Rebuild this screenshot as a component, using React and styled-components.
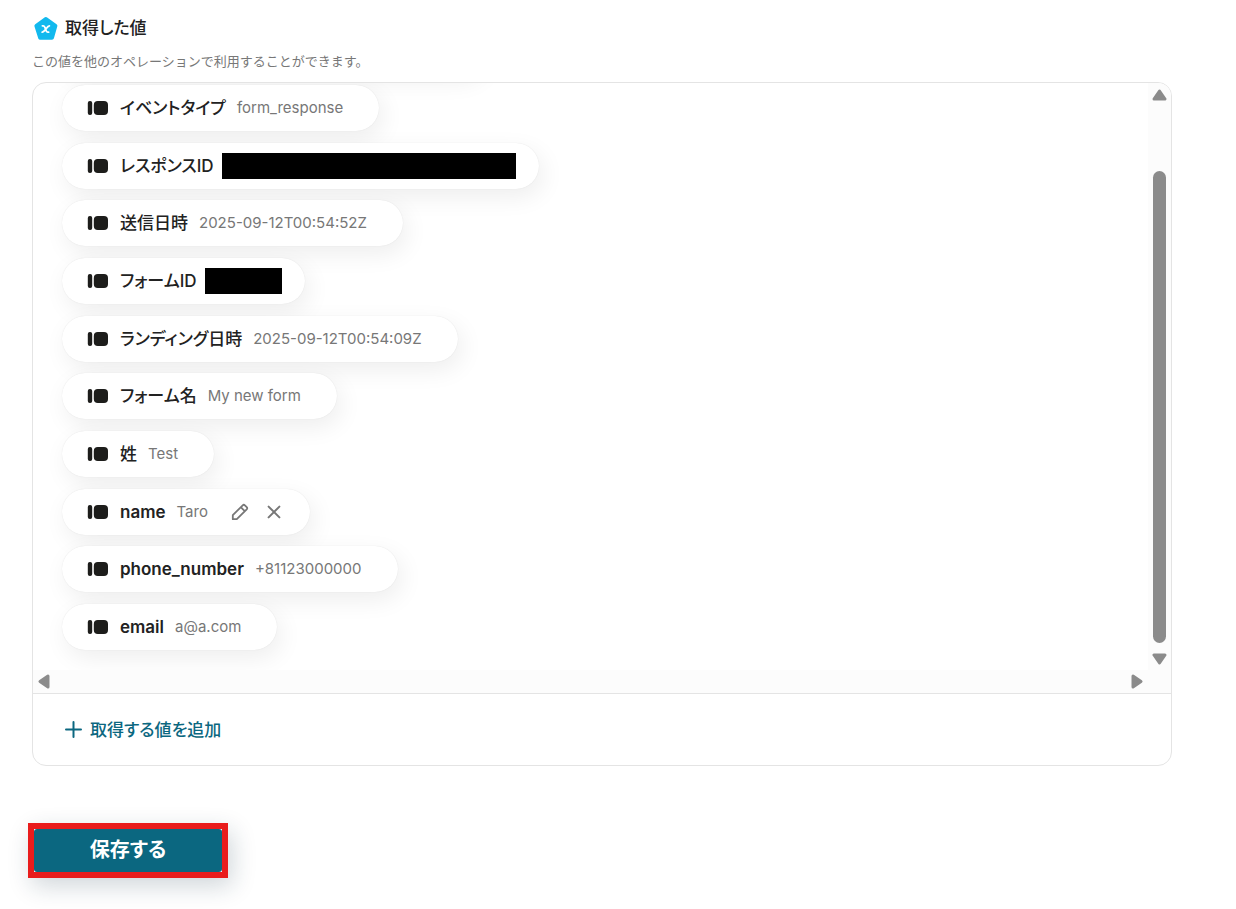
import React from "react";
import styled, { createGlobalStyle } from "styled-components";

const GlobalStyle = createGlobalStyle`
  * {
    box-sizing: border-box;
  }

  body {
    margin: 0;
    background: #fff;
    color: #222;
    font-family: Inter, "Noto Sans CJK JP", sans-serif;
    font-feature-settings: "palt";
  }

  button {
    font: inherit;
    font-feature-settings: inherit;
    cursor: pointer;
  }
`;

const Page = styled.main`
  padding: 16px 64px 32px 32px;
`;

const Header = styled.header`
  display: flex;
  align-items: center;
  gap: 6px;
  height: 24px;
  padding-left: 2px;
`;

const Title = styled.h2`
  margin: 0;
  font-size: 17px;
  line-height: 24px;
  font-weight: 500;
`;

const Description = styled.p`
  margin: 12px 0;
  font-size: 13px;
  line-height: 18px;
  font-feature-settings: normal;
  color: #777;
`;

const Panel = styled.section`
  border: 1px solid #e4e4e4;
  border-radius: 14px;
  overflow: hidden;
`;

const ScrollArea = styled.div`
  display: grid;
  grid-template-columns: 1fr 23px;
  grid-template-rows: 587px 23px;
`;

const Values = styled.ul`
  position: relative;
  display: flex;
  flex-direction: column;
  align-items: flex-start;
  justify-content: space-between;
  margin: 0;
  padding: 2px 29px 20px;
  list-style: none;
  overflow: hidden;

  /* the row scrolled out above the list */
  &::before {
    content: "";
    position: absolute;
    top: -56px;
    left: 29px;
    width: 420px;
    height: 46px;
    border-radius: 23px;
    box-shadow: 4px 8px 24px rgba(0, 0, 0, 0.07);
  }
`;

const Pill = styled.li`
  position: relative;
  display: flex;
  align-items: center;
  height: 46px;
  padding: 0 ${(props) => (props.$masked ? 23 : 36)}px 0 25px;
  border-radius: 23px;
  background: #fff;
  box-shadow: 4px 8px 24px rgba(0, 0, 0, 0.07), 0 0 1px rgba(0, 0, 0, 0.12);
`;

const Name = styled.span`
  margin-left: 12px;
  font-size: 17px;
  line-height: 24px;
  font-weight: ${(props) => (props.$latin ? 600 : 500)};
`;

const Value = styled.span`
  margin-left: 11px;
  font-size: 15px;
  line-height: 20px;
  color: #777;
`;

const Mask = styled.span`
  width: ${(props) => props.$width}px;
  height: 26px;
  margin-left: 8px;
  background: #000;
`;

const Actions = styled.span`
  display: flex;
  gap: 14px;
  margin: 0 -10px 0 22px;
`;

const IconButton = styled.button`
  display: flex;
  padding: 0;
  border: 0;
  background: none;
  color: #777;
`;

const Track = styled.div`
  display: flex;
  flex-direction: ${(props) => (props.$vertical ? "column" : "row")};
  align-items: center;
  justify-content: space-between;
  padding: ${(props) => (props.$vertical ? "6px 0 5px" : "0 5px")};
  background: #fcfcfc;
`;

const Thumb = styled.div`
  width: 13px;
  height: 472px;
  margin-top: 60px;
  border-radius: 7px;
  background: #8b8b8b;
`;

const Corner = styled.div`
  background: #fcfcfc;
`;

const PanelFooter = styled.div`
  display: flex;
  align-items: center;
  height: 72px;
  padding: 0 32px;
  border-top: 1px solid #e4e4e4;
`;

const AddButton = styled.button`
  display: flex;
  align-items: center;
  gap: 8px;
  padding: 0;
  border: 0;
  background: none;
  color: #0b6780;
  font-size: 17px;
  line-height: 24px;
  font-weight: 500;
`;

const SaveFrame = styled.div`
  width: 200px;
  margin: 57px 0 0 -4px;
  border: 6px solid #e91c1c;
  box-shadow: 4px 8px 24px rgba(20, 50, 70, 0.2);
`;

const SaveButton = styled.button`
  display: block;
  width: 100%;
  height: 43px;
  padding: 0 0 2px;
  border: 0;
  border-radius: 3px;
  background: #0b6780;
  color: #fff;
  font-size: 20px;
  line-height: 28px;
  font-weight: 700;
`;

const rows = [
  { name: "イベントタイプ", value: "form_response" },
  { name: "レスポンスID", mask: 294 },
  { name: "送信日時", value: "2025-09-12T00:54:52Z" },
  { name: "フォームID", mask: 77 },
  { name: "ランディング日時", value: "2025-09-12T00:54:09Z" },
  { name: "フォーム名", value: "My new form" },
  { name: "姓", value: "Test" },
  { name: "name", value: "Taro", latin: true, editable: true },
  { name: "phone_number", value: "+81123000000", latin: true },
  { name: "email", value: "a@a.com", latin: true },
];

const arrows = {
  up: "M7.5 2 13 10H2Z",
  down: "M7.5 10 2 2H13Z",
  left: "M2 7.5 10 2V13Z",
  right: "M10 7.5 2 2V13Z",
};

function Arrow({ direction }) {
  const vertical = direction === "up" || direction === "down";
  return (
    <svg width={vertical ? 15 : 12} height={vertical ? 12 : 15}>
      <path
        d={arrows[direction]}
        fill="#8b8b8b"
        stroke="#8b8b8b"
        strokeWidth="3"
        strokeLinejoin="round"
      />
    </svg>
  );
}

function VariableIcon() {
  return (
    <svg width="25" height="24" viewBox="0 0 25 24">
      <path
        d="M12 3 21.4 9.8 18 21.8H6.2L2.4 9.8Z"
        fill="#12b9ee"
        stroke="#12b9ee"
        strokeWidth="4"
        strokeLinejoin="round"
      />
      <path
        d="M8.4 9.8h.8c.8 0 1.2.4 1.5 1.2l1.6 4c.3.8.7 1.2 1.5 1.2h.8M15.4 9.8c-2.6 0-4.2 6.4-7.2 6.4"
        fill="none"
        stroke="#fff"
        strokeWidth="1.8"
        strokeLinecap="round"
      />
    </svg>
  );
}

function BlockIcon() {
  return (
    <svg width="21" height="14" viewBox="0 0 21 14">
      <rect x="0.8" y="0" width="4.4" height="14" rx="2" fill="#1d1d1b" />
      <rect x="6.8" y="0" width="14.2" height="14" rx="4" fill="#1d1d1b" />
    </svg>
  );
}

function PencilIcon() {
  return (
    <svg width="20" height="20" viewBox="0 0 20 20">
      <path
        d="M2.8 17.2v-4L12.7 3.3a1.6 1.6 0 0 1 2.2 0l1.8 1.8a1.6 1.6 0 0 1 0 2.2L6.8 17.2ZM10.8 5.2l4 4"
        fill="none"
        stroke="currentColor"
        strokeWidth="1.8"
        strokeLinejoin="round"
      />
    </svg>
  );
}

function CloseIcon() {
  return (
    <svg width="20" height="20" viewBox="0 0 20 20">
      <path
        d="M4.6 4.6l10.8 10.8M15.4 4.6l-10.8 10.8"
        stroke="currentColor"
        strokeWidth="2"
        strokeLinecap="round"
      />
    </svg>
  );
}

function PlusIcon() {
  return (
    <svg width="17" height="17" viewBox="0 0 17 17">
      <path
        d="M8.5 1v15M1 8.5h15"
        stroke="currentColor"
        strokeWidth="2"
        strokeLinecap="round"
      />
    </svg>
  );
}

export default function App() {
  return (
    <Page>
      <GlobalStyle />
      <Header>
        <VariableIcon />
        <Title>取得した値</Title>
      </Header>
      <Description>
        この値を他のオペレーションで利用することができます。
      </Description>
      <Panel>
        <ScrollArea>
          <Values>
            {rows.map((row) => (
              <Pill key={row.name} $masked={Boolean(row.mask)}>
                <BlockIcon />
                <Name $latin={row.latin}>{row.name}</Name>
                {row.mask && <Mask $width={row.mask} />}
                {row.value && <Value>{row.value}</Value>}
                {row.editable && (
                  <Actions>
                    <IconButton type="button" aria-label="編集">
                      <PencilIcon />
                    </IconButton>
                    <IconButton type="button" aria-label="削除">
                      <CloseIcon />
                    </IconButton>
                  </Actions>
                )}
              </Pill>
            ))}
          </Values>
          <Track $vertical>
            <Arrow direction="up" />
            <Thumb />
            <Arrow direction="down" />
          </Track>
          <Track>
            <Arrow direction="left" />
            <Arrow direction="right" />
          </Track>
          <Corner />
        </ScrollArea>
        <PanelFooter>
          <AddButton type="button">
            <PlusIcon />
            取得する値を追加
          </AddButton>
        </PanelFooter>
      </Panel>
      <SaveFrame>
        <SaveButton type="button">保存する</SaveButton>
      </SaveFrame>
    </Page>
  );
}
